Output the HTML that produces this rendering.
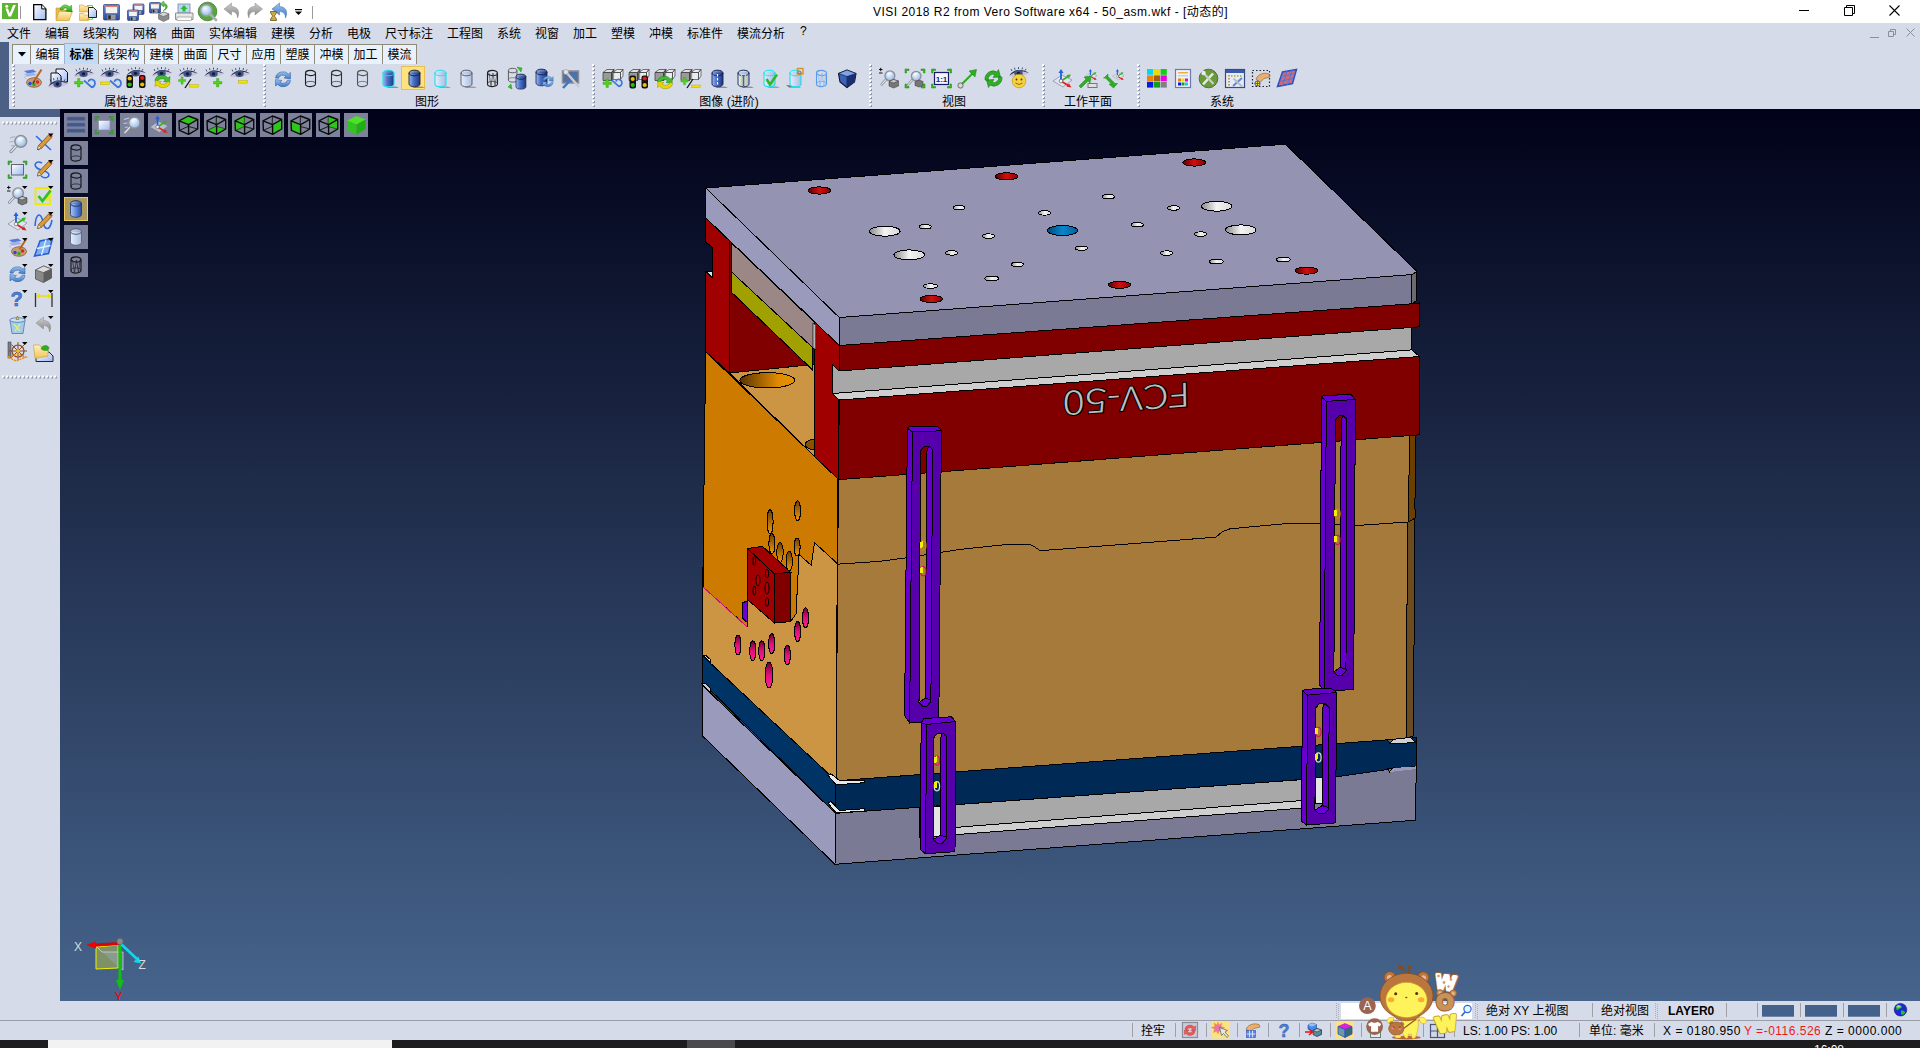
<!DOCTYPE html>
<html lang="zh-CN"><head><meta charset="utf-8"><title>VISI 2018 R2</title>
<style>
html,body{margin:0;padding:0;}
body{width:1920px;height:1048px;overflow:hidden;position:relative;background:#d6dbe9;font-family:"Liberation Sans","Noto Sans CJK SC",sans-serif;font-size:12px;color:#000;}
.abs{position:absolute;}
#title{left:0;top:0;width:1920px;height:23px;background:#fff;}
#title .t{position:absolute;left:873px;top:2px;font-size:12px;white-space:nowrap;letter-spacing:0.48px;}
#menu{left:0;top:23px;width:1920px;height:20px;background:#d6dbe9;}
#menu span{position:absolute;top:1px;font-size:12px;white-space:nowrap;}
#strip{left:0;top:42px;width:9px;height:75px;background:#4c6086;}
#strip2{left:0;top:109px;width:60px;height:8px;background:#4c6086;}
.tab{position:absolute;top:44px;height:20px;padding-top:2px;box-sizing:border-box;border:1px solid #8f8b78;border-bottom:none;background:#e8f1fc;font-size:12px;text-align:center;line-height:17px;white-space:nowrap;}
.tab.sel{background:#c2dcf6;font-weight:bold;top:43px;height:21px;border-color:#9db4cc;line-height:18px;}
#ribbon{left:9px;top:64px;width:1911px;height:45px;background:#d6dbe9;}
.glabel{position:absolute;top:96px;font-size:12px;white-space:nowrap;transform:translateX(-50%);line-height:13px;}
.grip{position:absolute;top:64px;width:3px;height:44px;background:repeating-linear-gradient(to bottom,#fff 0 2px,transparent 2px 4px) 0 0/2px 100% no-repeat,repeating-linear-gradient(to bottom,transparent 0 1px,#9097aa 1px 3px,transparent 3px 4px) 1px 0/2px 100% no-repeat;}
#view{left:60px;top:109px;width:1860px;height:892px;background:linear-gradient(to bottom,#010219 0%,#46648c 100%);overflow:hidden;}
.vb{position:absolute;width:24px;height:24px;background:#7c7f99;}
.vb.sel{background:#b9a46a;box-shadow:inset 0 0 0 1px #e2c25c;}
#status1{left:0;top:1001px;width:1920px;height:19px;background:#d6dbe9;}
#status2{left:0;top:1020px;width:1920px;height:20px;background:#d6dbe9;border-top:1px solid #9a9da8;box-sizing:border-box;}
#taskbar{left:0;top:1040px;width:1920px;height:8px;background:#1d1d1f;overflow:hidden;}
.st{position:absolute;font-size:12px;white-space:nowrap;line-height:14px;}
.ic{position:absolute;}
</style></head><body>
<div id="title" class="abs"><span class="t">VISI 2018 R2 from Vero Software x64 - 50_asm.wkf - [动态的]</span>
</div>
<div id="menu" class="abs">
<span style="left:7px">文件</span><span style="left:45px">编辑</span><span style="left:83px">线架构</span><span style="left:133px">网格</span><span style="left:171px">曲面</span><span style="left:209px">实体编辑</span><span style="left:271px">建模</span><span style="left:309px">分析</span><span style="left:347px">电极</span><span style="left:385px">尺寸标注</span><span style="left:447px">工程图</span><span style="left:497px">系统</span><span style="left:535px">视窗</span><span style="left:573px">加工</span><span style="left:611px">塑模</span><span style="left:649px">冲模</span><span style="left:687px">标准件</span><span style="left:737px">模流分析</span><span style="left:800px">?</span>
</div>
<div id="strip" class="abs"></div>
<div id="ribbon" class="abs"></div>
<div id="strip2" class="abs"></div>
<div class="tab" style="left:12px;width:19px;"><svg width="8" height="5" style="position:absolute;left:5px;top:7px"><path d="M0 0h8l-4 4.500z" fill="#000"/></svg></div>
<div class="tab" style="left:30px;width:35px;">编辑</div>
<div class="tab sel" style="left:64px;width:35px;">标准</div>
<div class="tab" style="left:98px;width:47px;">线架构</div>
<div class="tab" style="left:144px;width:35px;">建模</div>
<div class="tab" style="left:178px;width:35px;">曲面</div>
<div class="tab" style="left:212px;width:35px;">尺寸</div>
<div class="tab" style="left:246px;width:35px;">应用</div>
<div class="tab" style="left:280px;width:35px;">塑膜</div>
<div class="tab" style="left:314px;width:35px;">冲模</div>
<div class="tab" style="left:348px;width:35px;">加工</div>
<div class="tab" style="left:382px;width:35px;">模流</div>
<div class="glabel" style="left:136px">属性/过滤器</div>
<div class="glabel" style="left:427px">图形</div>
<div class="glabel" style="left:729px">图像 (进阶)</div>
<div class="glabel" style="left:954px">视图</div>
<div class="glabel" style="left:1088px">工作平面</div>
<div class="glabel" style="left:1222px">系统</div>
<div class="grip" style="left:12px"></div>
<div class="grip" style="left:263px"></div>
<div class="grip" style="left:592px"></div>
<div class="grip" style="left:869px"></div>
<div class="grip" style="left:1042px"></div>
<div class="grip" style="left:1137px"></div>
<svg class="abs" style="left:0;top:0" width="1920" height="109" viewBox="0 0 1920 109">
<defs>
<linearGradient id="doc" x1="0" y1="0" x2="1" y2="1"><stop offset="0" stop-color="#fff"/><stop offset="1" stop-color="#9db8ee"/></linearGradient>
<linearGradient id="fold" x1="0" y1="0" x2="0" y2="1"><stop offset="0" stop-color="#fdf0c0"/><stop offset="1" stop-color="#f2c458"/></linearGradient>
<linearGradient id="flop" x1="0" y1="0" x2="0" y2="1"><stop offset="0" stop-color="#6f8fd0"/><stop offset="1" stop-color="#2c4a96"/></linearGradient>
<linearGradient id="cylb" x1="0" x2="1"><stop offset="0" stop-color="#9dbcf0"/><stop offset="0.4" stop-color="#4a72c8"/><stop offset="1" stop-color="#1f3680"/></linearGradient>
<linearGradient id="cyll" x1="0" x2="1"><stop offset="0" stop-color="#e6eefc"/><stop offset="1" stop-color="#a9bde0"/></linearGradient>
<linearGradient id="grn" x1="0" y1="0" x2="0" y2="1"><stop offset="0" stop-color="#7be04a"/><stop offset="1" stop-color="#1e9a1e"/></linearGradient>
<linearGradient id="blu" x1="0" y1="0" x2="0" y2="1"><stop offset="0" stop-color="#9cc4ee"/><stop offset="1" stop-color="#3d78c4"/></linearGradient>
<linearGradient id="gry" x1="0" y1="0" x2="0" y2="1"><stop offset="0" stop-color="#d0d0d0"/><stop offset="1" stop-color="#808080"/></linearGradient>
<radialGradient id="lens" cx="0.4" cy="0.35" r="0.7"><stop offset="0" stop-color="#f4faff"/><stop offset="1" stop-color="#8fb6e0"/></radialGradient>
<g id="eye"><path d="M0,7.5 C3,1.5 13,-0.5 20,4.5 C15,8 6,9 0,7.5Z" fill="#c9c2dc"/><path d="M0.5,7 C4,1 13,-0.5 20,4.5 C14,1.8 6,2.5 0.5,7Z" fill="#27324f"/><ellipse cx="9.5" cy="4.8" rx="4.2" ry="3.3" fill="#3f5687"/><circle cx="9.5" cy="4.8" r="1.6" fill="#141a30"/><path d="M3,2.5l-1,-2M6,1.2l-.5,-2M9.5,.6l0,-2M13,1l.6,-2M16,2.2l1,-1.8" stroke="#27324f" stroke-width=".8" fill="none"/></g>
<g id="wcyl"><path d="M0.5,3 v11 a5,2.6 0 0 0 10,0 v-11" fill="none" stroke="currentColor" stroke-width="1.1"/><ellipse cx="5.5" cy="3" rx="5" ry="2.6" fill="none" stroke="currentColor" stroke-width="1.1"/><path d="M0.5,14 a5,2.6 0 0 1 10,0" fill="none" stroke="currentColor" stroke-width=".7"/></g>
<g id="scyl"><path d="M0,3 v11 a5.5,2.8 0 0 0 11,0 v-11z" /><ellipse cx="5.5" cy="3" rx="5.5" ry="2.8" fill-opacity=".75" stroke-width="1"/></g>
<g id="cubes"><path d="M0,4 l4,-3 h7 l-2.5,3z" fill="#e0e0e0" stroke="#333" stroke-width=".7"/><path d="M0,4 h8.5 v8 h-8.5z" fill="#9a9a9a" stroke="#333" stroke-width=".7"/><path d="M8.5,4 l2.5,-3 v7.5 l-2.5,3.5z" fill="#6a6a6a" stroke="#333" stroke-width=".7"/><path d="M10,4 l4,-3 h6 l-2.5,3z M10,4h7.5v7h-7.5z M17.500,4 l2.5,-3 v6.500 l-2.5,3.500z" fill="#f4f4f4" fill-opacity=".7" stroke="#444" stroke-width=".7"/></g>
<g id="plus"><path d="M0,3h3v-3h2.400v3h3v2.400h-3v3h-2.400v-3h-3z" fill="#4ed21e" stroke="#2e9a10" stroke-width=".4"/></g>
<g id="minus"><rect x="0" y="0" width="9" height="2.600" fill="#f2e400" stroke="#b0a000" stroke-width=".4"/></g>
<g id="curl"><path d="M0,2 l8,7 M8,9 c4,-2 4,-7 0,-8 c-2,-.4 -3.500,.8 -3.500,2.500" fill="none" stroke="#3b78d8" stroke-width="1.700"/></g>
<g id="tl"><rect x="0" y="0" width="6.500" height="13" rx="2" fill="#111"/></g>
<g id="refy"><path d="M2,8 a7,5.500 0 0 1 13,-3 l2,-1.500 l-.5,6 l-6,-1 l2,-1.500 a4.500,3.300 0 0 0 -8,1.500z" fill="#3fbf2f" stroke="#1a7a12" stroke-width=".5"/><path d="M17,9 a7,5.500 0 0 1 -13,3 l-2,1.500 l.5,-6 l6,1 l-2,1.500 a4.500,3.300 0 0 0 8,-1.500z" fill="#e8d800" stroke="#9a8c00" stroke-width=".5"/></g>
<g id="refb"><path d="M1,8 a7.500,7 0 0 1 13,-4 l2,-1.500 l0,6.500 l-6.500,-1 l2,-1.700 a4.500,4 0 0 0 -7.500,2z" fill="url(#blu)" stroke="#2a5aa0" stroke-width=".5"/><path d="M16,10.500 a7.500,7 0 0 1 -13,4 l-2,1.500 l0,-6.500 l6.500,1 l-2,1.700 a4.500,4 0 0 0 7.500,-2z" fill="url(#blu)" stroke="#2a5aa0" stroke-width=".5"/></g>
<g id="mag"><path d="M7,11.500 l-5.500,6" stroke="#8a8f98" stroke-width="3.200" stroke-linecap="round"/><path d="M7,11.500 l-5.500,6" stroke="#e4e6ea" stroke-width="1.300" stroke-linecap="round"/><circle cx="11.500" cy="7" r="6" fill="url(#lens)" stroke="#8a8f98" stroke-width="1.600"/><path d="M9,5 a3.500,3.500 0 0 1 5,-.5" stroke="#fff" stroke-width="1" fill="none"/></g>
<g id="gcorn"><path d="M0,0h4v1.500h-2.500v2.500h-1.500z M20,0h-4v1.500h2.500v2.500h1.500z M0,19h4v-1.500h-2.500v-2.500h-1.500z M20,19h-4v-1.500h2.500v-2.500h1.500z" fill="#35c01e" stroke="#1c8010" stroke-width=".5"/></g>
<g id="axes"><path d="M1,12 l9,-6 l10,5 l-9,7z" fill="#e8ecf6" fill-opacity=".55" stroke="#778" stroke-width=".6"/><path d="M9,12 v-10" stroke="#1f5fe0" stroke-width="1.800"/><path d="M9,0 l-2.500,4 h5z" fill="#1f5fe0"/><path d="M9,12 l8,-5" stroke="#2fb41e" stroke-width="1.700"/><path d="M19,5.500 l-4.500,.5 l2.500,3.200z" fill="#2fb41e"/><path d="M9,12 l8,5" stroke="#e02020" stroke-width="1.700"/><path d="M19.500,18.500 l-4.800,-.8 l2.300,-3.200z" fill="#e02020"/><circle cx="9" cy="12" r="1.800" fill="#f4f4f4" stroke="#555" stroke-width=".6"/></g>
</defs>
<rect x="2" y="3" width="16" height="16" fill="#5cb531"/><path d="M5.500,8.500 l3,8 h2.600 l4.800,-11.500 h-2.800 l-3.300,8.300 l-1.800,-4.800z" fill="#fff"/><circle cx="6.800" cy="6.200" r="1.500" fill="#fff"/>
<rect x="20" y="6" width="1" height="13" fill="#9a9a9a"/>
<path d="M33.700,4.700 h8 l4.200,4.200 v10.800 h-12.200z" fill="url(#doc)" stroke="#000" stroke-width="1.300"/><path d="M41.700,4.700 v4.200 h4.200" fill="#fff" stroke="#000" stroke-width="1"/>
<path d="M56,8 h5 l1.500,2 h7 v10 h-13.500z" fill="#e8b84a" stroke="#c89a30" stroke-width=".6"/><path d="M56,20.500 l3,-9 h13.500 l-3.500,9z" fill="url(#fold)" stroke="#d0a030" stroke-width=".6"/><path d="M60,9.500 c1,-5 7,-6 9.500,-2.500 l1.800,-1.800 l.8,6.800 l-6.500,-1 l1.900,-1.800 c-1.500,-2 -4,-1.500 -4.500,.8z" fill="url(#grn)" stroke="#17801a" stroke-width=".5"/>
<path d="M79.500,5 h4 l1,1.500 h4 v5.500 h-9z" fill="url(#fold)" stroke="#d0a030" stroke-width=".6"/><path d="M79.500,13.500 h4 l1,1.500 h4 v5.500 h-9z" fill="url(#fold)" stroke="#d0a030" stroke-width=".6"/><path d="M87,5.500 h5.500 v13.800 h-5.500" fill="none" stroke="#6ed060" stroke-width="1"/><path d="M88.500,7.500 h5 l3,3 v7 h-8z" fill="url(#doc)" stroke="#222" stroke-width="1"/>
<rect x="103.5" y="4.5" width="16" height="15.5" rx="1" fill="url(#flop)" stroke="#2a3f80" stroke-width=".7"/><rect x="105.7" y="5.1" width="11.5" height="8.1" fill="#f2f2f2"/><rect x="105.7" y="5.1" width="11.5" height="1.6" fill="#e04a3a"/><rect x="107.5" y="14.7" width="8.0" height="5.0" fill="#9a9a9a"/><rect x="108.3" y="15.3" width="2.4" height="3.9" fill="#222"/>
<rect x="133" y="4" width="11" height="10.5" rx="1" fill="url(#flop)" stroke="#2a3f80" stroke-width=".7"/><rect x="134.5" y="4.6" width="7.9" height="5.5" fill="#f2f2f2"/><rect x="134.5" y="4.6" width="7.9" height="1.1" fill="#e04a3a"/><rect x="135.8" y="10.9" width="5.5" height="3.4" fill="#9a9a9a"/><rect x="136.3" y="11.3" width="1.6" height="2.6" fill="#222"/>
<rect x="127.5" y="10" width="11" height="10.5" rx="1" fill="url(#flop)" stroke="#2a3f80" stroke-width=".7"/><rect x="129.0" y="10.6" width="7.9" height="5.5" fill="#f2f2f2"/><rect x="129.0" y="10.6" width="7.9" height="1.1" fill="#e04a3a"/><rect x="130.2" y="16.9" width="5.5" height="3.4" fill="#9a9a9a"/><rect x="130.8" y="17.4" width="1.6" height="2.6" fill="#222"/>
<rect x="149.5" y="2.5" width="11" height="10.5" rx="1" fill="url(#flop)" stroke="#2a3f80" stroke-width=".7"/><rect x="151.0" y="3.1" width="7.9" height="5.5" fill="#f2f2f2"/><rect x="151.0" y="3.1" width="7.9" height="1.1" fill="#e04a3a"/><rect x="152.2" y="9.4" width="5.5" height="3.4" fill="#9a9a9a"/><rect x="152.8" y="9.8" width="1.6" height="2.6" fill="#222"/>
<path d="M163,10.500 c2.500,-1 4,-4 1,-5.500 l0,2 l-4,-3 l4,-3 l0,2 c5,1.500 4,7 -1,7.500z" fill="url(#grn)" stroke="#17801a" stroke-width=".4"/>
<path d="M158.500,14.500 l5,-2.500 l5.500,2 v5 l-5.500,2.500 l-5,-2.500z" fill="#8c8c8c" stroke="#555" stroke-width=".5"/><path d="M158.500,14.500 l5,-2.500 l5.500,2 l-5.500,2.500z" fill="#d8d8d8" stroke="#555" stroke-width=".5"/>
<rect x="178" y="4" width="12" height="9" fill="#bcd6f6" stroke="#6a7a90" stroke-width=".7"/><path d="M184,5 l3.500,4 h-2 v2.500 h-3 v-2.500 h-2z" fill="#22c02a"/><path d="M175.500,13 h17.500 v6.500 h-17.500z" fill="#e8e8e8" stroke="#777" stroke-width=".8"/><rect x="177" y="17" width="14.500" height="3.500" fill="#fafafa" stroke="#888" stroke-width=".6"/>
<circle cx="207.500" cy="11.500" r="9.300" fill="#57a83a" stroke="#3a7a28" stroke-width=".8"/><circle cx="206.300" cy="10.300" r="5.600" fill="url(#lens)" stroke="#9aa0a8" stroke-width="1.500"/><path d="M210.500,14.500 l5.500,5.500" stroke="#a8aeb6" stroke-width="2.800" stroke-linecap="round"/>
<path d="M224,9 l7.500,-6 v3.500 c6,0 9,5 6,11.500 c0,-4 -2,-6.500 -6,-6.500 v3.500z" fill="url(#gry)" stroke="#8a8a8a" stroke-width=".5"/>
<path d="M262.500,9 l-7.500,-6 v3.500 c-6,0 -9,5 -6,11.500 c0,-4 2,-6.500 6,-6.500 v3.500z" fill="url(#gry)" stroke="#8a8a8a" stroke-width=".5"/>
<path d="M272,9 l7.500,-6 v3.500 c6,0 9,5 6,11.500 c0,-4 -2,-6.500 -6,-6.500 v3.500z" fill="url(#blu)" stroke="#3a6ab0" stroke-width=".5"/><path d="M270.500,11.500 h6 c0,3 -2,3.500 -2,4.500 c0,1 2,1.500 2,4.500 h-6 c0,-3 2,-3.500 2,-4.500 c0,-1 -2,-1.500 -2,-4.500z" fill="#c8a84a" stroke="#6a5410" stroke-width=".8"/>
<rect x="295" y="9" width="7" height="1.200" fill="#000"/><path d="M295,11.500 h7 l-3.500,3.500z" fill="#000"/>
<rect x="312" y="6" width="1" height="13" fill="#9a9a9a"/>
<path d="M1799,10.500 h10" stroke="#000" stroke-width="1"/><path d="M1844.500,7.500 h8 v8 h-8z M1846.500,7.500 v-2 h8 v8 h-2" fill="none" stroke="#000" stroke-width="1"/><path d="M1889.500,5.500 l10,10 M1899.500,5.500 l-10,10" stroke="#000" stroke-width="1.100"/>
<path d="M1870,37.500 h9" stroke="#8a8fa0" stroke-width="1"/><path d="M1888.500,31.500 h5 v5 h-5z M1890.500,31.500 v-2 h5 v5 h-2" fill="none" stroke="#8a8fa0" stroke-width="1"/><path d="M1906.500,28.500 l8,8 M1914.500,28.500 l-8,8" stroke="#8a8fa0" stroke-width="1"/>
<g transform="translate(24,69)"><path d="M0,2 l9,-1.500 l3.500,2.500 l-9,1.500z" fill="#5a78d8"/><path d="M0,5 l9,-1.500 l3.500,2.500 l-9,1.500z" fill="#9ab0f0"/><path d="M0,8 l9,-1.500 l3.500,2.500 l-9,1.500z" fill="#e0e4f0" stroke="#99a" stroke-width=".4"/><ellipse cx="10" cy="13.500" rx="7.500" ry="4.800" fill="#c89a70" stroke="#7a5030" stroke-width=".7"/><circle cx="6" cy="14.500" r="1.700" fill="#1d4be0"/><circle cx="10" cy="15.500" r="1.700" fill="#1fb01f"/><circle cx="13.500" cy="13" r="1.700" fill="#e02020"/><path d="M17.500,0.500 l-7,11" stroke="#b8641e" stroke-width="2"/><path d="M10.500,11.500 l-1.500,3" stroke="#333" stroke-width="1.500"/></g>
<g transform="translate(48,68)"><path d="M8,1 h8 l3.500,3.500 v9.500 h-11.500z" fill="url(#doc)" stroke="#111" stroke-width="1"/><path d="M3,5 h7 l3,3 v9 h-10z" fill="url(#doc)" stroke="#111" stroke-width="1"/><use href="#eye" transform="translate(0,11) scale(1,1.050)"/></g>
<use href="#eye" x="74" y="69"/><use href="#plus" x="74.500" y="78.500"/><use href="#curl" x="84" y="78.500"/>
<use href="#eye" x="100" y="69"/><use href="#minus" x="100.500" y="82"/><use href="#curl" x="110" y="78.500"/>
<use href="#eye" x="126" y="68.500"/><use href="#tl" x="126.500" y="75"/><use href="#tl" x="139" y="75"/><circle cx="129.700" cy="78.500" r="2.100" fill="#f0c000"/><circle cx="129.700" cy="84.500" r="2.100" fill="#18c818"/><circle cx="142.200" cy="78" r="2.100" fill="#e81818"/><circle cx="142.200" cy="84.500" r="2.100" fill="#f0c000"/>
<use href="#eye" x="152" y="68.500"/><use href="#refy" x="153" y="73"/>
<use href="#eye" x="178" y="69"/><use href="#plus" x="178.500" y="77" transform="translate(178.500,77) scale(.85) translate(-178.500,-77)"/><path d="M185,88 l6,-9" stroke="#111" stroke-width="1.300"/><use href="#minus" x="189.500" y="84.500"/>
<use href="#eye" x="204" y="69"/><use href="#plus" x="213.500" y="78.500"/>
<use href="#eye" x="230" y="69"/><use href="#minus" x="238.500" y="80.500"/>
<use href="#refb" x="274.500" y="70"/>
<use href="#wcyl" x="305" y="70" color="#222"/><use href="#wcyl" x="331" y="70" color="#333"/><use href="#wcyl" x="357" y="70" color="#555"/>
<path d="M386,86.500 l10,0 l3,1.500 l-11,0z" fill="#444" fill-opacity=".5"/><use href="#scyl" x="383" y="70" fill="url(#cylb)" stroke="#18e0f0" stroke-width="1.100"/>
<rect x="401.500" y="66.500" width="23" height="23" fill="#fde27f" stroke="#e8c050" stroke-width="1"/><path d="M412,86.500 l10,0 l3,1.500 l-11,0z" fill="#444" fill-opacity=".5"/><use href="#scyl" x="409" y="70" fill="url(#cylb)" stroke="#14204a" stroke-width=".9"/>
<path d="M438,86.500 l10,0 l3,1.500 l-11,0z" fill="#444" fill-opacity=".4"/><use href="#scyl" x="435" y="70" fill="url(#cyll)" stroke="#18e0f0" stroke-width="1.100"/>
<path d="M464,86.500 l10,0 l3,1.500 l-11,0z" fill="#444" fill-opacity=".4"/><use href="#scyl" x="461" y="70" fill="url(#cyll)" stroke="#556" stroke-width=".9"/>
<use href="#wcyl" x="487" y="70" color="#222"/><path d="M489,73 l2,13 l2,-13 l2,13 l2,-13" fill="none" stroke="#444" stroke-width=".7"/>
<use href="#wcyl" x="508" y="68" color="#555" transform="translate(508,68) scale(.85) translate(-508,-68)"/><use href="#scyl" x="516" y="74" fill="url(#cylb)" stroke="#14204a" stroke-width=".8" transform="translate(516,74) scale(.9) translate(-516,-74)"/><path d="M517,67 l5,1 l-1,4z M512,89 l-4,-2 l3,-3z" fill="#2fc02a" stroke="#17801a" stroke-width=".4"/>
<use href="#scyl" x="536" y="69" fill="url(#cylb)" stroke="#14204a" stroke-width=".8"/><use href="#refb" transform="translate(542,75) scale(.7)"/>
<rect x="562.500" y="71" width="16" height="12" fill="#5a6e9a" stroke="#8a8f9a" stroke-width="1.500"/><path d="M563,88 l14,-15" stroke="#3d78c4" stroke-width="2.500"/><path d="M566,72 l13,15" stroke="#c8ccd4" stroke-width="2.500"/><circle cx="566" cy="72" r="2.500" fill="#e0e4ea" stroke="#888" stroke-width=".5"/>
<use href="#cubes" x="603" y="68.500"/><use href="#plus" x="603" y="79"/><use href="#curl" x="612" y="78.500" transform="translate(612,78.500) scale(.9) translate(-612,-78.500)"/>
<use href="#cubes" x="629" y="68.500"/><use href="#tl" x="629.500" y="75.500"/><use href="#tl" x="641.500" y="75.500"/><circle cx="632.700" cy="79" r="2.100" fill="#f0c000"/><circle cx="632.700" cy="85" r="2.100" fill="#18c818"/><circle cx="644.700" cy="78.500" r="2.100" fill="#e81818"/><circle cx="644.700" cy="85" r="2.100" fill="#f0c000"/>
<use href="#cubes" x="655" y="68.500"/><use href="#refy" x="655.500" y="74"/>
<use href="#cubes" x="681" y="68.500"/><use href="#plus" x="681" y="77.500" transform="translate(681,77.500) scale(.85) translate(-681,-77.500)"/><path d="M687,88 l6,-9" stroke="#111" stroke-width="1.300"/><use href="#minus" x="691.500" y="85"/>
<path d="M715,86.500 l10,0 l3,1.500 l-11,0z" fill="#444" fill-opacity=".5"/><use href="#scyl" x="712" y="70" fill="url(#cylb)" stroke="#14204a" stroke-width=".9"/><path d="M717.500,74 v12" stroke="#fff" stroke-width="1.200" stroke-dasharray="2.500 1.500"/>
<path d="M741,86.500 l10,0 l3,1.500 l-11,0z" fill="#444" fill-opacity=".5"/><use href="#scyl" x="738" y="70" fill="url(#cyll)" stroke="#14204a" stroke-width=".9"/><path d="M741.500,75 v11 M745.500,75 v11" stroke="#e8dc30" stroke-width="1.500"/><path d="M743.500,75 v11" stroke="#3b62b8" stroke-width="1.500"/>
<path d="M767,86.500 l10,0 l3,1.500 l-11,0z" fill="#444" fill-opacity=".4"/><use href="#scyl" x="764" y="70" fill="url(#cyll)" stroke="#18e0f0" stroke-width="1.100"/><path d="M766.500,79 l3.500,5.500 l7,-10" fill="none" stroke="#2fb82a" stroke-width="2.600"/>
<path d="M786,85 l12,1 l3,1.500 l-12,0z" fill="#333" fill-opacity=".6"/><use href="#scyl" x="790" y="70" fill="url(#cyll)" stroke="#18e0f0" stroke-width="1.100"/><rect x="797.500" y="68.500" width="5.500" height="5.500" fill="none" stroke="#e0901a" stroke-width="1.400"/><circle cx="799.500" cy="72.500" r="1.500" fill="none" stroke="#e03a1a" stroke-width=".8"/>
<use href="#wcyl" x="816" y="70" color="#5a9ae8"/><path d="M818,73 l2,13 l2,-13 l2,13 l2,-13" fill="none" stroke="#8ab8f0" stroke-width=".7"/>
<path d="M838.500,73.500 l8.500,-3.500 l9,3.500 l-1.500,8.500 l-7.500,5.500 l-7,-5.500z" fill="#3b62b8" stroke="#0a1230" stroke-width="1.100"/><path d="M838.500,73.500 l8.500,-3.500 l9,3.500 l-9,3z" fill="#7fa4e6" stroke="#0a1230" stroke-width=".6"/><path d="M847,76.500 v11" stroke="#0a1230" stroke-width=".6"/><path d="M847,76.500 l9,-3 l-1.500,8.500 l-7.500,5.500z" fill="#1b2f70"/>
<use href="#mag" transform="translate(880.500,70) scale(.82)"/><path d="M879,69.500 h3.500 M880.700,67.800 v3.400 M879,73 h3.500" stroke="#000" stroke-width=".9"/><path d="M889,81.500 l4.500,-2 l5,1.500 v5 l-5,2 l-4.500,-2z" fill="#777" stroke="#333" stroke-width=".5"/><path d="M889,81.500 l4.500,-2 l5,1.500 l-5,2z" fill="#c8c8c8" stroke="#333" stroke-width=".5"/>
<use href="#mag" transform="translate(907,70.500) scale(.8)"/><use href="#gcorn" x="905" y="69"/><path d="M915,81.500 l4,-1.500 l4,1.500 v4 l-4,1.500 l-4,-1.500z" fill="#777" stroke="#333" stroke-width=".5"/>
<rect x="934.500" y="72.500" width="14" height="12" fill="#f4f6fc" stroke="#1a1a6a" stroke-width="1.200"/><use href="#gcorn" x="931.500" y="69"/><text x="941.500" y="82" font-size="8" font-weight="bold" text-anchor="middle" fill="#1a1a8a" font-family="Liberation Sans,sans-serif">1:1</text>
<path d="M961,85 l12,-12" stroke="#2fae22" stroke-width="2.200"/><path d="M976.500,69.500 l-7.500,1.500 l6,6z" fill="#2fae22" stroke="#17801a" stroke-width=".5"/><circle cx="960.500" cy="85.500" r="2.600" fill="#d8d8d8" stroke="#444" stroke-width=".7"/>
<path d="M985,80 a8,8.500 0 0 1 12,-8 l1.500,-2.500 l2,7.500 l-7.500,.5 l1.800,-2.500 a4.500,5 0 0 0 -6.500,5.500z M1002,77 a8,8.500 0 0 1 -12,8 l-1.500,2.500 l-2,-7.500 l7.500,-.5 l-1.800,2.500 a4.500,5 0 0 0 6.500,-5.500z" fill="#2fae22" stroke="#17801a" stroke-width=".6"/>
<use href="#eye" x="1009" y="68.500"/><circle cx="1019" cy="81" r="6.800" fill="#f6d23a" stroke="#c89a10" stroke-width=".7"/><circle cx="1016.500" cy="79.500" r=".9" fill="#333"/><circle cx="1021.500" cy="79.500" r=".9" fill="#333"/><path d="M1015.500,83 q3.500,3 7,0" fill="none" stroke="#7a4a10" stroke-width=".8"/>
<use href="#axes" x="1052" y="69"/>
<g transform="translate(1078,69)"><use href="#axes" transform="translate(7,0) scale(.6)"/><path d="M1,17 l7,-7 l-2,-2 l7,-1 l-1,7 l-2,-2 l-7,7z" fill="#2fae22" stroke="#17801a" stroke-width=".5"/><rect x="10" y="14.500" width="9" height="4" fill="#e0e0e0" stroke="#777" stroke-width="1"/></g>
<g transform="translate(1104,69)"><use href="#axes" transform="translate(8,0) scale(.6)"/><path d="M0,9 l4,-4 v2.500 l7,7 h2.500 l-4,4.500 l-4.500,-4 h2.500 l-6,-6 h-2z" fill="#2fae22" stroke="#17801a" stroke-width=".5"/></g>
<rect x="1147.0" y="69.0" width="6.200" height="5.800" fill="#00d8f0"/>
<rect x="1153.8" y="69.0" width="6.200" height="5.800" fill="#f0d800"/>
<rect x="1160.6" y="69.0" width="6.200" height="5.800" fill="#10d010"/>
<rect x="1147.0" y="75.4" width="6.200" height="5.800" fill="#f08000"/>
<rect x="1153.8" y="75.4" width="6.200" height="5.800" fill="#a06010"/>
<rect x="1160.6" y="75.4" width="6.200" height="5.800" fill="#f000e0"/>
<rect x="1147.0" y="81.8" width="6.200" height="5.800" fill="#0818e0"/>
<rect x="1153.8" y="81.8" width="6.200" height="5.800" fill="#10a020"/>
<rect x="1160.6" y="81.8" width="6.200" height="5.800" fill="#808080"/>
<rect x="1175.500" y="69.500" width="15" height="18" fill="#eef2fa" stroke="#6a7ab0" stroke-width="1.200"/><rect x="1178" y="72" width="10" height="1.500" fill="#f0b040"/><rect x="1178" y="75" width="10" height="1.500" fill="#c8d0e8"/><rect x="1178" y="78.500" width="3" height="3" fill="#f08000"/><rect x="1181.500" y="78.500" width="3" height="3" fill="#e0e020"/><rect x="1185" y="78.500" width="3" height="3" fill="#f000e0"/><rect x="1178" y="82.500" width="3" height="3" fill="#0818e0"/><rect x="1181.500" y="82.500" width="3" height="3" fill="#10a020"/><rect x="1185" y="82.500" width="3" height="3" fill="#10d0e0"/>
<circle cx="1208.500" cy="78.500" r="9.300" fill="#6a9a3a" stroke="#4a7428" stroke-width="1"/><path d="M1203,84.500 l10,-11" stroke="#e8eaf0" stroke-width="2.500"/><path d="M1203.500,73 l10,11" stroke="#c8ccd4" stroke-width="2.200"/><circle cx="1203.500" cy="73" r="2.200" fill="#e8eaf0"/>
<rect x="1225.500" y="69.500" width="19" height="18" fill="#e4ecf8" stroke="#3a4a80" stroke-width="1.200"/><rect x="1226" y="70" width="18" height="3" fill="#3a5aa8"/><path d="M1229,75 v11" stroke="#c87830" stroke-width="1.500" stroke-dasharray="1.500 1.500"/><path d="M1231,76 h12" stroke="#a0a830" stroke-width="1.500" stroke-dasharray="1.500 1.500"/><path d="M1233,86 l9,-8" stroke="#5a8ad8" stroke-width="2"/><path d="M1233.500,78.500 l8.500,8" stroke="#b8bcc8" stroke-width="2"/>
<rect x="1252.500" y="70.500" width="17" height="16" fill="none" stroke="#222" stroke-width="1.200" stroke-dasharray="1.500 2"/><path d="M1256,79 c2,-5 8,-7 13,-5 l1,3 l-6,1.500 l-4,4z" fill="#e8b070" stroke="#8a5a20" stroke-width=".6"/><circle cx="1257.500" cy="83.500" r="2.600" fill="#f0e040" stroke="#2a4ad0" stroke-width=".9"/><path d="M1255,83.500 h5 M1257.500,81 v5" stroke="#2a4ad0" stroke-width=".8"/>
<path d="M1277.500,86.500 l5,-14.500 l14,-2.500 l-4,14z" fill="#d06a7a" stroke="#2a50c0" stroke-width="1.500"/><path d="M1279.500,81.500 l13.500,-3 M1281,76.500 l14,-3 M1282.500,86 l4.500,-15 M1287.500,85 l4.500,-15" stroke="#4a78e0" stroke-width="1"/>
</svg>
<svg class="abs" style="left:0;top:117px" width="60" height="270" viewBox="0 117 60 270">
<path d="M3,123.500 h54 M3,377.500 h54" stroke="#9097aa" stroke-width="2" stroke-dasharray="2 2"/><path d="M2,122.500 h54 M2,376.500 h54" stroke="#fff" stroke-width="2" stroke-dasharray="2 2"/>
<path d="M10,138 l5,-1.500 M9.500,142 l4,-.5 M11,146 l3,-.5" stroke="#9fb0c8" stroke-width="1.200"/><use href="#mag" transform="translate(9.500,134.500) scale(.98)"/>
<path d="M36,136 l15,14 M38,150 l4,-4 M46,140 l6,-5" stroke="#2f6ae0" stroke-width="1.600" /><g transform="translate(34,133)"><path d="M3.500,16.500 l1,-4 l10,-10.500 l3,2.800 l-10,10.500z" fill="#d89a3a" stroke="#6a4210" stroke-width=".7"/><path d="M3.500,16.500 l1,-4 l3,2.800z" fill="#f0e0c0" stroke="#6a4210" stroke-width=".5"/><path d="M14.500,2 l1.200,-1.200 l3,2.800 l-1.200,1.200z" fill="#e03030"/></g><path d="M48,133.5 h5.500 l-2.750,3z" fill="#000"/>
<rect x="11.500" y="164.500" width="12" height="10.500" fill="url(#doc)" stroke="#667" stroke-width="1"/><use href="#gcorn" transform="translate(8,161) scale(.95,.92)"/>
<path d="M42,163 c-6,-3 -9,2 -5,5 c4,3 8,2 11,5 c3,3 -2,7 -7,3" fill="none" stroke="#2f6ae0" stroke-width="1.600"/><g transform="translate(34,159.5)"><path d="M3.500,16.500 l1,-4 l10,-10.500 l3,2.800 l-10,10.500z" fill="#d89a3a" stroke="#6a4210" stroke-width=".7"/><path d="M3.500,16.500 l1,-4 l3,2.800z" fill="#f0e0c0" stroke="#6a4210" stroke-width=".5"/><path d="M14.500,2 l1.200,-1.200 l3,2.800 l-1.200,1.200z" fill="#e03030"/></g><path d="M48,160 h5.500 l-2.750,3z" fill="#000"/>
<use href="#mag" transform="translate(8,187) scale(.88)"/><path d="M7,187.500 h3.500 M8.700,185.800 v3.400 M7,191 h3.500" stroke="#000" stroke-width=".9"/><path d="M18,198.500 l4,-2 l5,1.500 v5 l-5,2 l-4,-2z" fill="#777" stroke="#333" stroke-width=".5"/><path d="M18,198.500 l4,-2 l5,1.500 l-5,2z" fill="#c8c8c8" stroke="#333" stroke-width=".5"/><path d="M22,186 h5.500 l-2.750,3z" fill="#000"/>
<path d="M35.500,188 h14.500 v9 h-3.500 v2.500 h3.500 v4.500 h-14.500z" fill="none" stroke="#f0e800" stroke-width="1.800"/><path d="M38.500,196 l4,5 l8,-10.500" fill="none" stroke="#2fc02a" stroke-width="2.800"/><path d="M48,186 h5.500 l-2.750,3z" fill="#000"/>
<use href="#axes" x="7" y="212"/><path d="M22,212 h5.500 l-2.750,3z" fill="#000"/>
<path d="M35,226 c1,-14 6,-14 8,-4 c2,9 7,9 9,-2" fill="none" stroke="#2f6ae0" stroke-width="1.600"/><g transform="translate(34,212)"><path d="M3.500,16.500 l1,-4 l10,-10.500 l3,2.800 l-10,10.500z" fill="#d89a3a" stroke="#6a4210" stroke-width=".7"/><path d="M3.500,16.500 l1,-4 l3,2.800z" fill="#f0e0c0" stroke="#6a4210" stroke-width=".5"/><path d="M14.500,2 l1.200,-1.200 l3,2.800 l-1.200,1.200z" fill="#e03030"/></g><path d="M48,212 h5.500 l-2.750,3z" fill="#000"/>
<g transform="translate(9,238)"><path d="M0,2 l9,-1.500 l3.500,2.500 l-9,1.500z" fill="#5a78d8"/><path d="M0,5 l9,-1.500 l3.500,2.500 l-9,1.500z" fill="#9ab0f0"/><path d="M0,8 l9,-1.500 l3.500,2.500 l-9,1.500z" fill="#e0e4f0" stroke="#99a" stroke-width=".4"/><ellipse cx="10" cy="13.500" rx="7.500" ry="4.800" fill="#c89a70" stroke="#7a5030" stroke-width=".7"/><circle cx="6" cy="14.500" r="1.700" fill="#1d4be0"/><circle cx="10" cy="15.500" r="1.700" fill="#1fb01f"/><circle cx="13.500" cy="13" r="1.700" fill="#e02020"/><path d="M17.500,0.500 l-7,11" stroke="#b8641e" stroke-width="2"/></g><path d="M22,238 h5.500 l-2.750,3z" fill="#000"/>
<path d="M34.500,256 l5.500,-15 l12.500,-2.500 l-4,15z" fill="#7ab0f0" stroke="#2a5ad0" stroke-width="1.500"/><path d="M37,248.500 l13.500,-3 M41.500,255 l4.500,-15.500" stroke="#e8f0fc" stroke-width="1.300"/><path d="M48,238 h5.500 l-2.750,3z" fill="#000"/>
<use href="#refb" x="9" y="265"/><path d="M22,264 h5.500 l-2.750,3z" fill="#000"/>
<path d="M35.500,270 l8,-4 l8,3 v9 l-8,4.500 l-8,-3.500z" fill="#8a8a8a" stroke="#444" stroke-width=".7"/><path d="M35.500,270 l8,-4 l8,3 l-8,3.500z" fill="#dcdcdc" stroke="#444" stroke-width=".6"/><path d="M43.500,272.500 v10 l8,-4.500 v-9z" fill="#5e5e5e"/><path d="M48,264 h5.500 l-2.750,3z" fill="#000"/>
<text x="10.500" y="306" font-size="20" font-weight="bold" fill="#4a80d8" stroke="#2a58a8" stroke-width=".5" font-family="Liberation Sans,sans-serif">?</text><path d="M22,290 h5.500 l-2.750,3z" fill="#000"/>
<path d="M35.500,293 v14 M52,293 v14" stroke="#333" stroke-width="1.300"/><path d="M37,296 h14" stroke="#e8e000" stroke-width="1.600"/><path d="M36,296 l3.500,-2.500 v5z M51.500,296 l-3.500,-2.500 v5z" fill="#e8e000"/><path d="M48,290 h5.500 l-2.750,3z" fill="#000"/>
<path d="M10,320 l2,13.500 h11 l2,-13.500z" fill="#9cc8ec" fill-opacity=".85" stroke="#4a7aa8" stroke-width=".8"/><ellipse cx="17.500" cy="320" rx="7.800" ry="2.300" fill="#c8e0f4" stroke="#4a7aa8" stroke-width=".8"/><path d="M16,319.500 l1.500,-3.500 l1.500,3.500z" fill="#f0e020" stroke="#333" stroke-width=".4"/><path d="M14,324 l6,7 M20,324 l-5,7" stroke="#d8f088" stroke-width="1.300"/><path d="M22,316 h5.500 l-2.750,3z" fill="#000"/>
<path d="M36,323 l7.500,-6 v3.500 c6,0 9,5 6,11.500 c0,-4 -2,-6.500 -6,-6.500 v3.500z" fill="url(#gry)" stroke="#8a8a8a" stroke-width=".5"/><path d="M48,316 h5.500 l-2.750,3z" fill="#000"/>
<rect x="8" y="342" width="3" height="16" fill="#7a8088" stroke="#333" stroke-width=".5"/><circle cx="18" cy="351" r="6" fill="none" stroke="#8a4a2a" stroke-width="1.200"/><path d="M18,342 v18 M9,351 h18 M11.500,344.500 l13,13 M24.500,344.500 l-13,13" stroke="#8a4a2a" stroke-width="1"/><circle cx="18" cy="351" r="1.800" fill="#f0c000"/><path d="M8,357 l10,-3 l8,3 l-10,4z" fill="none" stroke="#f08a10" stroke-width="1.500" stroke-dasharray="2 1"/><path d="M22,342 h5.500 l-2.750,3z" fill="#000"/>
<path d="M36,352 h13 l4,4 v5.500 h-17z" fill="url(#doc)" stroke="#222" stroke-width="1"/><path d="M33.500,345 h6 l1.500,2 h7 v9 l-13,2.500z" fill="url(#fold)" stroke="#c89a30" stroke-width=".6"/><path d="M41,349 c1,-4 6,-4.500 8,-1.500 l-1,3 h-4z" fill="#2fae22" stroke="#17801a" stroke-width=".4"/>
</svg>
<div id="view" class="abs">
<svg id="model" width="1860" height="892" viewBox="60 109 1860 892" style="position:absolute;left:0;top:0" shape-rendering="crispEdges">
<defs>
<linearGradient id="gw" x1="0" x2="1"><stop offset="0" stop-color="#8a8a8a"/><stop offset="0.5" stop-color="#f4f4f4"/><stop offset="1" stop-color="#d8d8d8"/></linearGradient>
<linearGradient id="gr" x1="0" x2="1"><stop offset="0" stop-color="#5a0000"/><stop offset="0.5" stop-color="#d01010"/><stop offset="1" stop-color="#900000"/></linearGradient>
<linearGradient id="gb" x1="0" x2="1"><stop offset="0" stop-color="#004a7a"/><stop offset="0.5" stop-color="#0a86c8"/><stop offset="1" stop-color="#0060a0"/></linearGradient>
<linearGradient id="go" x1="0" x2="1"><stop offset="0" stop-color="#5a3400"/><stop offset="0.7" stop-color="#e08a00"/><stop offset="1" stop-color="#e69000"/></linearGradient>
<linearGradient id="gov" x1="0" y1="0" x2="0" y2="1"><stop offset="0" stop-color="#6a3c00"/><stop offset="1" stop-color="#f09a10"/></linearGradient>
<linearGradient id="gpv" x1="0" y1="0" x2="0" y2="1"><stop offset="0" stop-color="#6a0030"/><stop offset="0.5" stop-color="#e0107a"/><stop offset="1" stop-color="#ff2090"/></linearGradient>
</defs>
<g stroke="#000" stroke-width="1" stroke-linejoin="round">
<!-- top plate -->
<polygon points="705.8,188 1285.4,144.2 1416.9,271.5 1411.8,274.6 839.3,317.5" fill="#9494b2"/>
<polygon points="705.8,188 839.3,317.5 839.3,345.5 705.8,217.9" fill="#9a9abc"/>
<polygon points="839.3,317.5 1411.8,274.6 1411.8,303.8 839.3,345.5" fill="#7a7a94"/>
<polygon points="1411.8,274.6 1416.9,271.5 1416.9,300.5 1411.8,303.8" fill="#6a6a70"/>
<!-- left recess -->
<polygon points="729.5,240.7 815,322 815,364.4 729.5,373" fill="#800000"/>
<polygon points="729.5,373 814.2,364.4 814.2,456.2" fill="#cc9544"/>
<polygon points="731,242.5 815.5,323.2 815.5,349 812.9,347.8 731,271.4" fill="#9b8785"/>
<polygon points="731,271.4 812.9,347.8 812.9,370.2 731,291.8" fill="#a0a000"/>
<!-- red left column w/ notch -->
<polygon points="705.8,217.9 729.5,240.7 729.5,373 705.8,351.8 705.8,271.4 712,277.6 712,246.8 705.8,242.4" fill="#a00000"/>
<polygon points="705.8,271.4 712,271.4 712,277.6" fill="#e0e0e0"/>
<!-- light tan left face (lower plate) -->
<polygon points="703.5,520 837.5,520 836,780.8 702.1,655.4" fill="#cc9544"/>
<!-- tan top surface holes -->
<ellipse cx="767.3" cy="380.3" rx="27.4" ry="7.7" fill="url(#go)"/>
<path d="M814.2,439.5 A9,5 0 0 0 814.2,449.5 Z" fill="#8a5200"/>
<!-- orange left face -->
<polygon points="705.8,351.8 837.5,478.5 837.1,563.4 814.5,542.6 811.2,565.2 799.1,554.6 796,613.9 790.5,621.6 747.5,600 747.1,626.7 703.2,587.1 704.3,450" fill="#cc7a00"/>
<!-- red column right -->
<polygon points="814.2,321.5 839.3,345.5 838.4,479.4 814.2,456.2" fill="#a00000"/>
<polygon points="812.9,323 815.6,325.5 815.6,349.5 812.9,347.8" fill="#b4b4b4" stroke="#000" stroke-width=".6"/>
<!-- front bands -->
<polygon points="839.3,345.5 1411.8,303.8 1419.5,303 1419.5,326.8 839.3,371" fill="#800000"/>
<polygon points="832.2,364.3 839.3,371 1411.8,327.4 1411.8,349.9 832.2,393.5" fill="#a8a8a8"/>
<polygon points="832.2,393.5 1411.8,349.9 1419.5,356.5 839.3,400" fill="#cfcfcf"/>
<polygon points="839.3,400 1419.5,356.5 1419.5,434.8 838.4,479.7" fill="#800000"/>
<polygon points="838.4,479.7 1409.6,435.6 1408.3,522 1407.4,522.5 1406.4,738.5 836,780.8" fill="#a67a3a"/>
<polygon points="1409.6,435.6 1415.1,435.2 1415,518.2 1408.3,522" fill="#6b3f00"/>
<polygon points="1407.4,522.5 1415,518.2 1413.3,736 1406.4,738.5" fill="#6b4c20"/>
<polyline points="837.5,564.2 880,561.3 905,558 940,552.5 960,549.4 1010.6,544.1 1029.4,544.1 1034,546.5 1039.7,550.3 1051.9,549.9 1215.9,537.2 1222.5,531.6 1230,528.8 1291.9,523.1 1320,523.4 1355,525.6 1408.3,522" fill="none"/>
<!-- navy -->
<polygon points="702.1,655.4 836,780.8 835.5,813.3 702.1,682" fill="#003366"/>
<polygon points="836,780.8 1416.2,737.7 1416.2,766.4 1387.5,769.5 1336.8,776.8 1280,781.2 1100,794.2 835.5,813.3" fill="#002a55"/>
<!-- bottom plate -->
<polygon points="702.1,685 835.5,813.3 835,864.3 702.1,735.5" fill="#9a9abc"/>
<polygon points="835.5,813.3 1100,794.2 1280,781.2 1336.8,776.8 1387.5,769.5 1416.2,767 1415.6,820.2 835,864.3" fill="#7a7a94"/>
<polygon points="919.5,807.3 1100,794.2 1301,779.7 1301,800.6 919.5,830.2" fill="#a8a8a8"/>
<polygon points="919.5,830.2 1301,800.6 1301,808.2 919.5,837.4" fill="#cfcfcf"/>
</g>
<g stroke="#000" stroke-width="1">
<ellipse cx="819.3" cy="190.5" rx="11.3" ry="3.6" fill="url(#gr)"/>
<ellipse cx="1006.6" cy="176.4" rx="11.3" ry="3.6" fill="url(#gr)"/>
<ellipse cx="1194.2" cy="162.5" rx="11.3" ry="3.6" fill="url(#gr)"/>
<ellipse cx="931.4" cy="299" rx="11.3" ry="3.6" fill="url(#gr)"/>
<ellipse cx="1119.5" cy="284.8" rx="11.3" ry="3.6" fill="url(#gr)"/>
<ellipse cx="1306.5" cy="270.6" rx="11.3" ry="3.6" fill="url(#gr)"/>
<ellipse cx="884.8" cy="231.2" rx="15.3" ry="5" fill="url(#gw)"/>
<ellipse cx="909.2" cy="254.9" rx="15.3" ry="5" fill="url(#gw)"/>
<ellipse cx="1216.6" cy="206.2" rx="15.3" ry="5" fill="url(#gw)"/>
<ellipse cx="1240.8" cy="229.9" rx="15.3" ry="5" fill="url(#gw)"/>
<ellipse cx="1062.5" cy="230.5" rx="15" ry="5" fill="url(#gb)"/>
<ellipse cx="959" cy="207.8" rx="6" ry="2.2" fill="url(#gw)"/>
<ellipse cx="1044.5" cy="212.9" rx="6" ry="2.2" fill="url(#gw)"/>
<ellipse cx="925.2" cy="226.8" rx="6" ry="2.2" fill="url(#gw)"/>
<ellipse cx="988.3" cy="236.1" rx="6" ry="2.2" fill="url(#gw)"/>
<ellipse cx="951.7" cy="252.9" rx="6" ry="2.2" fill="url(#gw)"/>
<ellipse cx="1017.4" cy="264.4" rx="6" ry="2.2" fill="url(#gw)"/>
<ellipse cx="991.7" cy="278.4" rx="7" ry="2.2" fill="url(#gw)"/>
<ellipse cx="930.4" cy="286.1" rx="7" ry="2.2" fill="url(#gw)"/>
<ellipse cx="1108.4" cy="196.7" rx="6" ry="2.2" fill="url(#gw)"/>
<ellipse cx="1173.6" cy="208" rx="6" ry="2.2" fill="url(#gw)"/>
<ellipse cx="1137.3" cy="224.8" rx="6" ry="2.2" fill="url(#gw)"/>
<ellipse cx="1200.6" cy="234.1" rx="6" ry="2.2" fill="url(#gw)"/>
<ellipse cx="1081.4" cy="248.2" rx="6" ry="2.2" fill="url(#gw)"/>
<ellipse cx="1166.6" cy="253.1" rx="6" ry="2.2" fill="url(#gw)"/>
<ellipse cx="1216.3" cy="261.6" rx="7" ry="2.2" fill="url(#gw)"/>
<ellipse cx="1283.3" cy="259.6" rx="7" ry="2.2" fill="url(#gw)"/>
<ellipse cx="770.1" cy="521.7" rx="3" ry="12" fill="url(#gov)"/>
<ellipse cx="797.6" cy="510.7" rx="2.9" ry="10" fill="url(#gov)"/>
<ellipse cx="771.9" cy="543.7" rx="3" ry="10" fill="url(#gov)"/>
<ellipse cx="780" cy="552.4" rx="3.2" ry="10" fill="url(#gov)"/>
<ellipse cx="789.2" cy="561.2" rx="3.2" ry="10" fill="url(#gov)"/>
<ellipse cx="797.1" cy="547" rx="3" ry="9" fill="url(#gov)"/>
<ellipse cx="737.9" cy="645.1" rx="3" ry="10" fill="url(#gpv)"/>
<ellipse cx="752.8" cy="650.8" rx="3" ry="10" fill="url(#gpv)"/>
<ellipse cx="761.8" cy="650.8" rx="3" ry="10" fill="url(#gpv)"/>
<ellipse cx="771.7" cy="643.6" rx="3" ry="10" fill="url(#gpv)"/>
<ellipse cx="787.3" cy="655" rx="3" ry="10" fill="url(#gpv)"/>
<ellipse cx="797.6" cy="631.5" rx="3" ry="10" fill="url(#gpv)"/>
<ellipse cx="805.5" cy="617.9" rx="3" ry="10" fill="url(#gpv)"/>
<ellipse cx="769" cy="675" rx="4" ry="13" fill="url(#gpv)"/>
<polygon points="742.2,603 747.5,600.7 747.5,622.7 742.2,618" fill="#6a00d4"/>
<polyline points="703.2,587.1 742.2,622.5 747.1,626.7" fill="none" stroke="#d0107a" stroke-width="1"/>
<polygon points="747.5,548.5 762.4,546.3 790.5,572.2 774.5,574" fill="#a00000"/>
<polygon points="747.5,548.5 774.5,574 774.5,623.1 747.5,599.6" fill="#a00000"/>
<polygon points="774.5,574 790.5,572.2 790.5,621.6 774.5,623.1" fill="#800000"/>
<ellipse cx="754.3" cy="561" rx="1.3" ry="4.5" fill="#b00000" style="shape-rendering:geometricPrecision"/>
<ellipse cx="767" cy="573.5" rx="1.6" ry="4.5" fill="#b00000" style="shape-rendering:geometricPrecision"/>
<ellipse cx="758" cy="580.5" rx="2" ry="5.5" fill="#b00000" style="shape-rendering:geometricPrecision"/>
<ellipse cx="767" cy="588" rx="2" ry="6" fill="#b00000" style="shape-rendering:geometricPrecision"/>
<ellipse cx="754.3" cy="590.5" rx="1.3" ry="4.5" fill="#b00000" style="shape-rendering:geometricPrecision"/>
<ellipse cx="767" cy="602" rx="1.6" ry="4.5" fill="#b00000" style="shape-rendering:geometricPrecision"/>
<polygon points="703.2,655.6 710.9,663.3 710.9,660 706,655.6" fill="#e8e8e8"/>
<polygon points="702.1,683.9 710.9,692.7 710.9,689 706,683.9" fill="#c8c8d8"/>
<polygon points="828,775.4 836,784.8 864.8,782.7 864.8,780 840,781 831,773.8" fill="#e8e8e8"/>
<polygon points="828,803 836,812.8 864,811.2 864,808.8 849,809.5 840,811 831,801.5" fill="#e8e8e8"/>
<polygon points="1387.5,740 1410.2,737.4 1416.2,742.7 1390.8,743.6" fill="#d0d0d0"/>
<polygon points="1387.5,768.5 1393.5,768 1389.5,772" fill="#808080"/><polygon points="1389.5,772 1393.5,768 1416.2,766.4 1416.2,769" fill="#9a9abc" stroke="none"/>
<polygon points="1387.5,740 1393,739.3 1390,743.5" fill="#606060"/>
<polygon points="919,808 943.6,806.3 943.6,836 919,837.5" fill="#e4e4e4"/>
<polygon points="1301,779 1323,777.5 1323,803 1301,804.5" fill="#e4e4e4"/>
<polygon points="907.4,428 912.5,432 909.6,722.9 904.6,715.7" fill="#6600cc"/>
<polygon points="907.4,428 912.5,432 941.4,430.8 937.5,426.4 909,427" fill="#6600cc"/>
<path d="M912.5,432 L941.4,430.8 L938.8,721.6 L909.6,722.9 Z M920.6,450.7 L924.6,446.2 L929.1,446.2 L932.6,449.7 L930.9,701.5 L926.9,706 L922.5,706 L919,702.5 Z" fill="#5500aa" fill-rule="evenodd"/>
<polygon points="926.84,451.2 928.34,446.7 929.1,446.2 932.6,449.7 930.9,701.5 926.9,706 925.188,698" fill="#6600cc"/>
<polygon points="919,702.5 925.188,698 930.9,700 930.9,701.5 926.9,706 922.5,706" fill="#6a00d8"/>
<ellipse cx="923.3000000000001" cy="545.5" rx="2.7" ry="4.6" fill="none" stroke="#e08000" stroke-width="1.2" style="shape-rendering:geometricPrecision"/>
<polygon points="920.1,541.9 922.9000000000001,541.3 923.3000000000001,547.1 920.1,547.9" fill="#f0f000" stroke="none"/>
<ellipse cx="923.3000000000001" cy="571.2" rx="2.7" ry="4.6" fill="none" stroke="#e0106a" stroke-width="1.2" style="shape-rendering:geometricPrecision"/>
<polygon points="920.1,567.6 922.9000000000001,567.0 923.3000000000001,572.8000000000001 920.1,573.6" fill="#f0f000" stroke="none"/>
<polygon points="921.2,722.9 926.5,724.4 925.6,853.8 920.1,849.4" fill="#6600cc"/>
<polygon points="921.2,722.9 926.5,724.4 955.7,721.6 951.3,716.8 923.9,718.5" fill="#6600cc"/>
<path d="M926.5,724.4 L955.7,721.6 L955,851.6 L925.6,853.8 Z M933.7,737.7 L937.7,733.2 L943.4,733.2 L946.9,736.7 L946.5,838.5 L942.5,843 L937.0,843 L933.5,839.5 Z" fill="#5500aa" fill-rule="evenodd"/>
<polygon points="940.564,738.2 942.064,733.7 943.4,733.2 946.9,736.7 946.5,838.5 942.5,843 940.26,835" fill="#6600cc"/>
<polygon points="933.5,839.5 940.26,835 946.5,837 946.5,838.5 942.5,843 937.0,843" fill="#6a00d8"/>
<ellipse cx="936.9" cy="760.6" rx="2.7" ry="4.6" fill="none" stroke="#e0106a" stroke-width="1.2" style="shape-rendering:geometricPrecision"/>
<polygon points="933.6999999999999,757.0 936.5,756.4 936.9,762.2 933.6999999999999,763.0" fill="#f0f000" stroke="none"/>
<ellipse cx="936.9" cy="786.2" rx="2.7" ry="4.6" fill="none" stroke="#e0e0e0" stroke-width="1.2" style="shape-rendering:geometricPrecision"/>
<polygon points="933.6999999999999,782.6 936.5,782.0 936.9,787.8000000000001 933.6999999999999,788.6" fill="#f0f000" stroke="none"/>
<polygon points="1321.5,397 1326.4,401.4 1324,691 1319.6,685" fill="#6600cc"/>
<polygon points="1321.5,397 1326.4,401.4 1355.4,399.4 1350.8,394.3 1323.5,395.7" fill="#6600cc"/>
<path d="M1326.4,401.4 L1355.4,399.4 L1353.7,689.6 L1324,691 Z M1335.4,419.9 L1339.4,415.4 L1342.9,415.4 L1346.4,418.9 L1346,670.9 L1342,675.4 L1337.4,675.4 L1333.9,671.9 Z" fill="#5500aa" fill-rule="evenodd"/>
<polygon points="1341.1200000000001,420.4 1342.6200000000001,415.9 1342.9,415.4 1346.4,418.9 1346,670.9 1342,675.4 1340.192,667.4" fill="#6600cc"/>
<polygon points="1333.9,671.9 1340.192,667.4 1346,669.4 1346,670.9 1342,675.4 1337.4,675.4" fill="#6a00d8"/>
<ellipse cx="1337.3999999999999" cy="513.8" rx="2.7" ry="4.6" fill="none" stroke="#e08000" stroke-width="1.2" style="shape-rendering:geometricPrecision"/>
<polygon points="1334.2,510.19999999999993 1337.0,509.59999999999997 1337.3999999999999,515.4 1334.2,516.1999999999999" fill="#f0f000" stroke="none"/>
<ellipse cx="1337.3999999999999" cy="540" rx="2.7" ry="4.6" fill="none" stroke="#e0106a" stroke-width="1.2" style="shape-rendering:geometricPrecision"/>
<polygon points="1334.2,536.4 1337.0,535.8 1337.3999999999999,541.6 1334.2,542.4" fill="#f0f000" stroke="none"/>
<polygon points="1302.5,690.7 1307.6,695.1 1306.5,825 1301.4,821.3" fill="#6600cc"/>
<polygon points="1302.5,690.7 1307.6,695.1 1336.5,692.5 1331.7,688.5 1305,689.2" fill="#6600cc"/>
<path d="M1307.6,695.1 L1336.5,692.5 L1335.7,822.9 L1306.5,825 Z M1315.2,708.4 L1319.2,703.9 L1325.6,703.9 L1329.1,707.4 L1328.8,809.1 L1324.8,813.6 L1318.5,813.6 L1315,810.1 Z" fill="#5500aa" fill-rule="evenodd"/>
<polygon points="1322.4279999999999,708.9 1323.9279999999999,704.4 1325.6,703.9 1329.1,707.4 1328.8,809.1 1324.8,813.6 1322.176,805.6" fill="#6600cc"/>
<polygon points="1315,810.1 1322.176,805.6 1328.8,807.6 1328.8,809.1 1324.8,813.6 1318.5,813.6" fill="#6a00d8"/>
<ellipse cx="1318.3999999999999" cy="732" rx="2.7" ry="4.6" fill="none" stroke="#e0106a" stroke-width="1.2" style="shape-rendering:geometricPrecision"/>
<polygon points="1315.2,728.4 1318.0,727.8 1318.3999999999999,733.6 1315.2,734.4" fill="#f0f000" stroke="none"/>
<ellipse cx="1318.3999999999999" cy="757.5" rx="2.7" ry="4.6" fill="none" stroke="#e0e0e0" stroke-width="1.2" style="shape-rendering:geometricPrecision"/>
<polygon points="1315.2,753.9 1318.0,753.3 1318.3999999999999,759.1 1315.2,759.9" fill="#f0f000" stroke="none"/>
</g>
<text x="0" y="0" transform="translate(1190,382.5) rotate(176) skewX(-3)" font-family="'Noto Sans CJK SC','Liberation Sans',sans-serif" font-weight="300" font-size="32.5" fill="#bdbdbd" stroke="#000" stroke-width="2" paint-order="stroke" style="shape-rendering:auto" textLength="128" lengthAdjust="spacingAndGlyphs">FCV-50</text>
</svg>
</div>
<svg class="abs" style="left:60px;top:109px" width="320" height="180" viewBox="60 109 320 180">
<rect x="64" y="113" width="24" height="24" fill="#7e819a"/>
<rect x="92" y="113" width="24" height="24" fill="#7e819a"/>
<rect x="120" y="113" width="24" height="24" fill="#7e819a"/>
<rect x="148" y="113" width="24" height="24" fill="#7e819a"/>
<rect x="176" y="113" width="24" height="24" fill="#7e819a"/>
<rect x="204" y="113" width="24" height="24" fill="#7e819a"/>
<rect x="232" y="113" width="24" height="24" fill="#7e819a"/>
<rect x="260" y="113" width="24" height="24" fill="#7e819a"/>
<rect x="288" y="113" width="24" height="24" fill="#7e819a"/>
<rect x="316" y="113" width="24" height="24" fill="#7e819a"/>
<rect x="344" y="113" width="24" height="24" fill="#7e819a"/>
<rect x="64" y="141" width="24" height="24" fill="#7e819a"/>
<rect x="64" y="169" width="24" height="24" fill="#7e819a"/>
<rect x="64.500" y="197.5" width="23" height="23" fill="#ab9a62" stroke="#f0cc58" stroke-width="1"/>
<rect x="64" y="225" width="24" height="24" fill="#7e819a"/>
<rect x="64" y="253" width="24" height="24" fill="#7e819a"/>
<rect x="67" y="117" width="18" height="3.500" fill="#44598a" stroke="#5a70a0" stroke-width=".5"/>
<rect x="67" y="123" width="18" height="3.500" fill="#44598a" stroke="#5a70a0" stroke-width=".5"/>
<rect x="67" y="129" width="18" height="3.500" fill="#44598a" stroke="#5a70a0" stroke-width=".5"/>
<rect x="98.500" y="120.500" width="11.500" height="9.500" fill="url(#doc)" stroke="#889" stroke-width=".6"/><use href="#gcorn" transform="translate(95,116.500) scale(.9,.92)"/>
<path d="M124,119.500 l5,-1.500 M123.500,123.500 l4,-.5 M125,127.500 l3,-.5" stroke="#c0cce0" stroke-width="1.200"/><use href="#mag" transform="translate(123.500,116) scale(.95)"/>
<use href="#axes" transform="translate(149,115.500) scale(.95)"/>
<path d="M188.2,126.4 L188.4,116.0 M188.2,126.4 L179.4,130.4 M188.2,126.4 L197.7,129.0" stroke="#111" stroke-width=".9" fill="none"/><polygon points="188.4,116.0 197.7,119.5 188.6,124.6 179.0,120.8" fill="#2fc41e" stroke="#5fe03a" stroke-width=".5"/><path d="M188.4,116.0 L197.7,119.5 L197.7,129.0 L188.6,134.4 L179.4,130.4 L179.0,120.8 Z M179.0,120.8 L188.6,124.6 L197.7,119.5 M188.6,124.6 L188.6,134.4" stroke="#0a0a0a" stroke-width="1.400" fill="none" stroke-linejoin="round"/>
<path d="M216.2,126.4 L216.4,116.0 M216.2,126.4 L207.4,130.4 M216.2,126.4 L225.7,129.0" stroke="#111" stroke-width=".9" fill="none"/><polygon points="207.4,130.4 216.2,126.4 225.7,129.0 216.6,134.4" fill="#2fc41e" stroke="#5fe03a" stroke-width=".5"/><path d="M216.2,126.4 L216.4,116.0 M216.2,126.4 L207.4,130.4 M216.2,126.4 L225.7,129.0" stroke="#0a3a0a" stroke-width=".6" fill="none"/><path d="M216.4,116.0 L225.7,119.5 L225.7,129.0 L216.6,134.4 L207.4,130.4 L207.0,120.8 Z M207.0,120.8 L216.6,124.6 L225.7,119.5 M216.6,124.6 L216.6,134.4" stroke="#0a0a0a" stroke-width="1.400" fill="none" stroke-linejoin="round"/>
<path d="M244.2,126.4 L244.4,116.0 M244.2,126.4 L235.4,130.4 M244.2,126.4 L253.7,129.0" stroke="#111" stroke-width=".9" fill="none"/><polygon points="235.0,120.8 244.4,116.0 244.2,126.4 235.4,130.4" fill="#2fc41e" stroke="#5fe03a" stroke-width=".5"/><path d="M244.2,126.4 L244.4,116.0 M244.2,126.4 L235.4,130.4 M244.2,126.4 L253.7,129.0" stroke="#0a3a0a" stroke-width=".6" fill="none"/><path d="M244.4,116.0 L253.7,119.5 L253.7,129.0 L244.6,134.4 L235.4,130.4 L235.0,120.8 Z M235.0,120.8 L244.6,124.6 L253.7,119.5 M244.6,124.6 L244.6,134.4" stroke="#0a0a0a" stroke-width="1.400" fill="none" stroke-linejoin="round"/>
<path d="M272.2,126.4 L272.4,116.0 M272.2,126.4 L263.4,130.4 M272.2,126.4 L281.7,129.0" stroke="#111" stroke-width=".9" fill="none"/><polygon points="272.6,124.6 281.7,119.5 281.7,129.0 272.6,134.4" fill="#2fc41e" stroke="#5fe03a" stroke-width=".5"/><path d="M272.4,116.0 L281.7,119.5 L281.7,129.0 L272.6,134.4 L263.4,130.4 L263.0,120.8 Z M263.0,120.8 L272.6,124.6 L281.7,119.5 M272.6,124.6 L272.6,134.4" stroke="#0a0a0a" stroke-width="1.400" fill="none" stroke-linejoin="round"/>
<path d="M300.2,126.4 L300.4,116.0 M300.2,126.4 L291.4,130.4 M300.2,126.4 L309.7,129.0" stroke="#111" stroke-width=".9" fill="none"/><polygon points="291.0,120.8 300.6,124.6 300.6,134.4 291.4,130.4" fill="#2fc41e" stroke="#5fe03a" stroke-width=".5"/><path d="M300.4,116.0 L309.7,119.5 L309.7,129.0 L300.6,134.4 L291.4,130.4 L291.0,120.8 Z M291.0,120.8 L300.6,124.6 L309.7,119.5 M300.6,124.6 L300.6,134.4" stroke="#0a0a0a" stroke-width="1.400" fill="none" stroke-linejoin="round"/>
<path d="M328.2,126.4 L328.4,116.0 M328.2,126.4 L319.4,130.4 M328.2,126.4 L337.7,129.0" stroke="#111" stroke-width=".9" fill="none"/><polygon points="328.4,116.0 337.7,119.5 337.7,129.0 328.2,126.4" fill="#2fc41e" stroke="#5fe03a" stroke-width=".5"/><path d="M328.2,126.4 L328.4,116.0 M328.2,126.4 L319.4,130.4 M328.2,126.4 L337.7,129.0" stroke="#0a3a0a" stroke-width=".6" fill="none"/><path d="M328.4,116.0 L337.7,119.5 L337.7,129.0 L328.6,134.4 L319.4,130.4 L319.0,120.8 Z M319.0,120.8 L328.6,124.6 L337.7,119.5 M328.6,124.6 L328.6,134.4" stroke="#0a0a0a" stroke-width="1.400" fill="none" stroke-linejoin="round"/>
<polygon points="356.4,116.0 365.7,119.5 356.6,124.6 347.0,120.8" fill="#4fe02a"/><polygon points="347.0,120.8 356.6,124.6 356.6,134.4 347.4,130.4" fill="#2fc41e"/><polygon points="356.6,124.6 365.7,119.5 365.7,129.0 356.6,134.4" fill="#1fae14"/>
<use href="#wcyl" x="70.500" y="144.500" color="#16161e"/><use href="#wcyl" x="70.500" y="172.500" color="#16161e"/>
<use href="#scyl" x="70.500" y="200.500" fill="url(#cylb2)" stroke="#20386e" stroke-width=".8"/>
<use href="#scyl" x="70.500" y="228.500" fill="url(#cyll)" stroke="#55607a" stroke-width=".8"/>
<use href="#wcyl" x="70.500" y="256.500" color="#16161e"/><path d="M72.500,260 l2,12.500 l2,-12.500 l2,12.500 l1.500,-12.500" fill="none" stroke="#222" stroke-width=".7"/>
<defs><linearGradient id="cylb2" x1="0" x2="1"><stop offset="0" stop-color="#a8c8f8"/><stop offset="0.5" stop-color="#5f8ade"/><stop offset="1" stop-color="#2c4a9a"/></linearGradient></defs>
</svg>
<svg class="abs" style="left:70px;top:930px" width="90" height="70" viewBox="70 930 90 70">
<polygon points="96,947 118,945 118,968 96,969" fill="#8a9a62" fill-opacity=".85" stroke="#f0f000" stroke-width="1"/><path d="M97,947 l5,5 h21 v18 l-5,-3" fill="#9ab0d8" fill-opacity=".35" stroke="#d0d0d0" stroke-width=".8"/>
<path d="M120,943.500 l-24,1.500" stroke="#e00000" stroke-width="3"/><path d="M86,945 l10,-3.500 v7z" fill="#f00000"/>
<path d="M120,945 v36" stroke="#10c010" stroke-width="3"/><path d="M120,990 l-4,-10 h8z" fill="#10c010"/>
<path d="M120,943 l17,16" stroke="#10d8e8" stroke-width="2.500"/><path d="M141,963.500 l-7.500,-1.500 l5,-5.500z" fill="#10d8e8"/>
<circle cx="120" cy="941.500" r="3.200" fill="#8a8a8a" stroke="#555" stroke-width=".5"/>
<text x="74" y="950.500" font-size="12" fill="#d8d8d8" font-family="Liberation Sans,sans-serif">X</text><text x="138.500" y="969" font-size="12" fill="#d8d8d8" font-family="Liberation Sans,sans-serif">Z</text><text x="114.500" y="1001" font-size="12" fill="#f00000" font-family="Liberation Sans,sans-serif">Y</text>
</svg>
<div id="status1" class="abs"></div><div id="status2" class="abs"></div>
<div id="taskbar" class="abs"><div class="abs" style="left:48px;top:0;width:344px;height:8px;background:#f2f2f2"></div><div class="abs" style="left:687px;top:0;width:48px;height:8px;background:#4a4a4c"></div><div class="abs" style="left:1814px;top:3px;color:#fff;font-size:12px;line-height:14px;">16:08</div></div>
<div class="st" style="left:1486px;top:1004px;">绝对 XY 上视图</div>
<div class="st" style="left:1601px;top:1004px;">绝对视图</div>
<div class="st" style="left:1668px;top:1004px;font-weight:bold;">LAYER0</div>
<div class="st" style="left:1141px;top:1024px;">拴牢</div>
<div class="st" style="left:1463px;top:1024px;">LS: 1.00 PS: 1.00</div>
<div class="st" style="left:1589px;top:1024px;">单位: 毫米</div>
<div class="st" style="left:1663px;top:1024px;letter-spacing:.52px;">X = 0180.950</div>
<div class="st" style="left:1744px;top:1024px;letter-spacing:.5px;color:#f01818;">Y =-0116.526</div>
<div class="st" style="left:1825px;top:1024px;letter-spacing:.52px;">Z = 0000.000</div>
<svg class="abs" style="left:1100px;top:955px" width="820" height="93" viewBox="1100 955 820 93">
<rect x="1341" y="1003" width="131" height="16" fill="#fff"/>
<path d="M1336.5,1003 v16 M1338.5,1004 v16" stroke="#a6abbd" stroke-width="1" stroke-dasharray="1 1"/>
<path d="M1475.5,1003 v16 M1477.5,1004 v16" stroke="#a6abbd" stroke-width="1" stroke-dasharray="1 1"/>
<path d="M1655.5,1003 v16 M1657.5,1004 v16" stroke="#a6abbd" stroke-width="1" stroke-dasharray="1 1"/>
<circle cx="1467.500" cy="1009" r="3.600" fill="#eaf4ff" stroke="#2a6ad0" stroke-width="1.200"/><path d="M1465,1012 l-3.500,4" stroke="#2a6ad0" stroke-width="1.600"/>
<path d="M1592.5,1003 v14" stroke="#a0a0a4" stroke-width="1"/>
<path d="M1726.5,1003 v14" stroke="#a0a0a4" stroke-width="1"/>
<path d="M1757.5,1003 v14" stroke="#a0a0a4" stroke-width="1"/>
<path d="M1800.5,1003 v14" stroke="#a0a0a4" stroke-width="1"/>
<path d="M1843.5,1003 v14" stroke="#a0a0a4" stroke-width="1"/>
<path d="M1886.5,1003 v14" stroke="#a0a0a4" stroke-width="1"/>
<rect x="1762" y="1005" width="32" height="11.700" fill="#44618b"/>
<rect x="1805" y="1005" width="32" height="11.700" fill="#44618b"/>
<rect x="1848" y="1005" width="32" height="11.700" fill="#44618b"/>
<circle cx="1900.500" cy="1009.700" r="6.300" fill="#1a2ad0" stroke="#101a70" stroke-width=".6"/><path d="M1896,1007 c2,-3 5,-2 6,0 c-1,2 -3,1 -4,3 c-1,1 -2,-1 -2,-3z M1901,1011 c2,-1 4,0 4,2 c-1,2 -3,2 -4,1z" fill="#28c028"/><ellipse cx="1898.500" cy="1006.500" rx="2" ry="1.200" fill="#fff" fill-opacity=".5"/>
<path d="M1132.5,1023 v14" stroke="#a0a0a4" stroke-width="1"/>
<path d="M1175.5,1023 v14" stroke="#a0a0a4" stroke-width="1"/>
<path d="M1206.5,1023 v14" stroke="#a0a0a4" stroke-width="1"/>
<path d="M1237.5,1023 v14" stroke="#a0a0a4" stroke-width="1"/>
<path d="M1268.5,1023 v14" stroke="#a0a0a4" stroke-width="1"/>
<path d="M1299.5,1023 v14" stroke="#a0a0a4" stroke-width="1"/>
<path d="M1330.5,1023 v14" stroke="#a0a0a4" stroke-width="1"/>
<path d="M1361.5,1023 v14" stroke="#a0a0a4" stroke-width="1"/>
<path d="M1423.5,1023 v14" stroke="#a0a0a4" stroke-width="1"/>
<path d="M1454.5,1023 v14" stroke="#a0a0a4" stroke-width="1"/>
<path d="M1579.5,1023 v14" stroke="#a0a0a4" stroke-width="1"/>
<path d="M1654.5,1023 v14" stroke="#a0a0a4" stroke-width="1"/>
<rect x="1182.500" y="1022.500" width="15" height="15" fill="#c8ccd8" stroke="#8a8e9a" stroke-width="1.200"/><path d="M1185,1029 a5,4.500 0 0 1 9,-2 l1.500,-1 v4.500 h-4.500 l1.500,-1.500 a3,2.800 0 0 0 -5.500,1z M1195,1031.500 a5,4.500 0 0 1 -9,2 l-1.500,1 v-4.500 h4.500 l-1.500,1.500 a3,2.800 0 0 0 5.500,-1z" fill="#f05a5a" stroke="#b02a2a" stroke-width=".4"/>
<rect x="1212" y="1021.500" width="18" height="17" fill="#fde27f"/><path d="M1218,1022 l1,3 l3,-2 l-1,3.500 l3.500,1 l-3.500,1.500 l1.500,3 l-3.500,-1 l-1,3 l-1.500,-3 l-3,1.500 l1,-3.500 l-3,-1.500 l3.500,-1 l-1,-3.500 l3,2z" fill="#f070b0" stroke="#d8a020" stroke-width=".5"/><path d="M1219.500,1027.500 l2,8 l2,-2 l3.500,4 l1.500,-1.500 l-3.500,-4 l2.500,-1.500z" fill="#e8e8e8" stroke="#555" stroke-width=".7"/>
<path d="M1246,1029 c3,-5 8,-6 13,-4.500 l1,2.500 l-6,1.500 l-4,3.500z" fill="#e8b070" stroke="#8a5a20" stroke-width=".6"/><rect x="1246.500" y="1030.500" width="9" height="7" fill="#5a8ae8" stroke="#2a4aa0" stroke-width=".6"/><path d="M1249.500,1030.500 v7 M1252.500,1030.500 v7 M1246.500,1034 h9" stroke="#e8f0ff" stroke-width=".8"/>
<text x="1278.500" y="1037" font-size="18" font-weight="bold" fill="#4a80d8" stroke="#2a58a8" stroke-width=".4" font-family="Liberation Sans,sans-serif">?</text>
<path d="M1308,1025 l4,-2 l4.500,1.500 v4.500 l-4.500,2 l-4,-2z" fill="#4a8ae8" stroke="#1a3a90" stroke-width=".6"/><path d="M1308,1025 l4,-2 l4.500,1.500 l-4.500,2z" fill="#9ac0f8"/><path d="M1313,1030.500 l4,-2 l4.500,1.500 v4.500 l-4.500,2 l-4,-2z" fill="#5a8a98" stroke="#1a2a30" stroke-width=".7"/><path d="M1313,1030.500 l4,-2 l4.500,1.500 l-4.500,2z" fill="#a8c8d0" stroke="#1a2a30" stroke-width=".5"/><path d="M1305,1032 h7 M1309,1029 l3.500,3 l-3.500,3" stroke="#f01010" stroke-width="1.500" fill="none"/>
<rect x="1336" y="1021.500" width="18" height="17" fill="#fde27f"/><path d="M1338,1026.500 l7,-3 l7,3 l-7,3z" fill="#e020e0" stroke="#a010a0" stroke-width=".5"/><path d="M1338,1026.500 l7,3 v8 l-7,-3.500z" fill="#6a98a8" stroke="#2a50c0" stroke-width=".8"/><path d="M1345,1029.500 l7,-3 v7.500 l-7,3.500z" fill="#3a6878" stroke="#2a50c0" stroke-width=".8"/>
<rect x="1430.500" y="1024.500" width="14" height="13" fill="#d0d6e6" stroke="#4a5478" stroke-width="1.200"/><path d="M1437.500,1024.500 v13 M1430.500,1031 h14" stroke="#4a5478" stroke-width="1.200"/>
<rect x="1370.500" y="1030" width="10" height="7.500" fill="#e4e8f0" stroke="#5a8a6a" stroke-width="1"/>
<g>
<ellipse cx="1406.300" cy="1037.600" rx="14.500" ry="1.800" fill="#b5673a"/>
<path d="M1406,974 c-.5,-3 -2.500,-5.500 -5,-6.500" stroke="#8a4a1c" stroke-width="1.700" fill="none" stroke-linecap="round"/><ellipse cx="1400.500" cy="967.300" rx="2.900" ry="2" fill="#8a4a1c" transform="rotate(25 1400.500 967.300)"/><path d="M1408.300,974 c0,-2.500 .5,-4.500 1.200,-6" stroke="#8a4a1c" stroke-width="1.600" fill="none" stroke-linecap="round"/><ellipse cx="1409.600" cy="967.500" rx="1.500" ry="1.900" fill="#8a4a1c"/>
<circle cx="1389.900" cy="977.400" r="5.800" fill="#b9773e" stroke="#8a4a1c" stroke-width=".8"/><circle cx="1389.600" cy="977.600" r="2.600" fill="#eeb49a"/><circle cx="1423.200" cy="977.600" r="5.800" fill="#b9773e" stroke="#8a4a1c" stroke-width=".8"/><circle cx="1423.500" cy="977.800" r="2.600" fill="#eeb49a"/>
<ellipse cx="1406.500" cy="996" rx="26.600" ry="22.800" fill="#b9773e" stroke="#8a4a1c" stroke-width=".8"/>
<path d="M1394,1017.500 c-4,-1 -7.500,1.500 -7,4 c.5,2.200 3,2.300 5.500,.8 z" fill="#fff35c" stroke="#d8a820" stroke-width=".6"/><path d="M1418.500,1017.500 c4,-1.500 8,1 8,4 c-.5,2.500 -3,2.800 -6,1 z" fill="#fff35c" stroke="#d8a820" stroke-width=".6"/>
<path d="M1402,1020 c-1,5 -1,10 1,14 l2,3.500 c1,1.200 3,.8 3,-.8 l.3,-2.500 l3,0 l.5,3 c.5,1.800 3.500,1.600 3.800,-.2 c1.500,-4 3.500,-10 2.500,-17 z" fill="#fff35c" stroke="#d8a820" stroke-width=".6"/>
<path d="M1394.300,1016.500 c3,5.500 21,5.500 25,0 l-1.500,-3 h-22z" fill="#b9773e" stroke="#8a4a1c" stroke-width=".6"/>
<ellipse cx="1406.500" cy="1000" rx="20.700" ry="17.700" fill="#fff35c" stroke="#c8902a" stroke-width=".7"/>
<circle cx="1395.700" cy="993.700" r="1.500" fill="#5a2a10"/><circle cx="1416.700" cy="993.500" r="1.500" fill="#5a2a10"/><ellipse cx="1406.300" cy="997.500" rx="1.200" ry=".8" fill="#8a4a1c"/><ellipse cx="1391.100" cy="999.700" rx="3.300" ry="2.500" fill="#f8a030" fill-opacity=".85"/><ellipse cx="1421.200" cy="999.700" rx="3.300" ry="2.500" fill="#f8a030" fill-opacity=".85"/>
<path d="M1416,1019.300 l-12,9" stroke="#9a5a28" stroke-width="1.300"/>
<circle cx="1391.500" cy="1023.300" r="1.900" fill="#b9773e" stroke="#8a4a1c" stroke-width=".4"/><circle cx="1401.900" cy="1024.100" r="1.900" fill="#b9773e" stroke="#8a4a1c" stroke-width=".4"/><ellipse cx="1396.300" cy="1028.600" rx="7.600" ry="6.600" fill="#b9773e" stroke="#8a4a1c" stroke-width=".6"/><path d="M1393,1026.800 l1.600,.7 M1399,1027.200 l1.600,-.5" stroke="#5a2a10" stroke-width=".7"/><ellipse cx="1392.700" cy="1028.400" rx="1.400" ry=".9" fill="#ff70c8"/><ellipse cx="1399.700" cy="1029.200" rx="1.400" ry=".9" fill="#ff70c8"/><ellipse cx="1398" cy="1036.500" rx="3" ry="1.500" fill="#fff35c" stroke="#d8a820" stroke-width=".4"/>
<circle cx="1367.400" cy="1005.700" r="8.400" fill="#9a6352"/><text x="1367.400" y="1010.300" font-size="12.500" text-anchor="middle" fill="#fff" font-family="Liberation Sans,sans-serif">A</text>
<circle cx="1374.600" cy="1026.600" r="8.400" fill="#9a6352"/><path d="M1371.700,1021.700 l-3.700,2.300 l1.500,2.600 l1.600,-.9 v6 h7 v-6 l1.600,.9 l1.500,-2.600 l-3.700,-2.300 c-1,1.400 -4.800,1.400 -5.800,0z" fill="#fff"/>
<text transform="translate(1435,988.500) rotate(7)" font-size="21" font-weight="bold" font-family="Liberation Sans,sans-serif" stroke-linejoin="round" fill="#a0622e" stroke="#a0622e" stroke-width="4.6">W</text><text transform="translate(1435,988.500) rotate(7)" font-size="21" font-weight="bold" font-family="Liberation Sans,sans-serif" stroke-linejoin="round" fill="#ffffff" stroke="#ffffff" stroke-width="2.6">W</text>
<circle cx="1438.500" cy="976" r="1.300" fill="#d89a62"/><circle cx="1444" cy="982.500" r="1.400" fill="#d89a62"/><circle cx="1451" cy="979.500" r="1.300" fill="#d89a62"/><circle cx="1448.500" cy="986.500" r="1.200" fill="#d89a62"/>
<circle cx="1440" cy="992.900" r="3.300" fill="#c8935a" stroke="#9a5a2a" stroke-width=".7"/><circle cx="1453.200" cy="993.300" r="3.300" fill="#c8935a" stroke="#9a5a2a" stroke-width=".7"/><circle cx="1440" cy="993" r="1.400" fill="#e8b898"/><circle cx="1453.200" cy="993.400" r="1.400" fill="#e8b898"/>
<text transform="translate(1437.200,1009.500) rotate(-3)" font-size="21" font-weight="bold" font-family="Liberation Sans,sans-serif" stroke-linejoin="round" fill="#9a5a2a" stroke="#9a5a2a" stroke-width="4.4">O</text><text transform="translate(1437.200,1009.500) rotate(-3)" font-size="21" font-weight="bold" font-family="Liberation Sans,sans-serif" stroke-linejoin="round" fill="#c8935a" stroke="#c8935a" stroke-width="2.6">O</text>
<text transform="translate(1437.500,1032.500) rotate(-9)" font-size="21" font-weight="bold" font-family="Liberation Sans,sans-serif" stroke-linejoin="round" fill="#c8a020" stroke="#c8a020" stroke-width="4.4">W</text><text transform="translate(1437.500,1032.500) rotate(-9)" font-size="21" font-weight="bold" font-family="Liberation Sans,sans-serif" stroke-linejoin="round" fill="#fff35c" stroke="#fff35c" stroke-width="2.6">W</text>
</g>
</svg>
</body></html>
